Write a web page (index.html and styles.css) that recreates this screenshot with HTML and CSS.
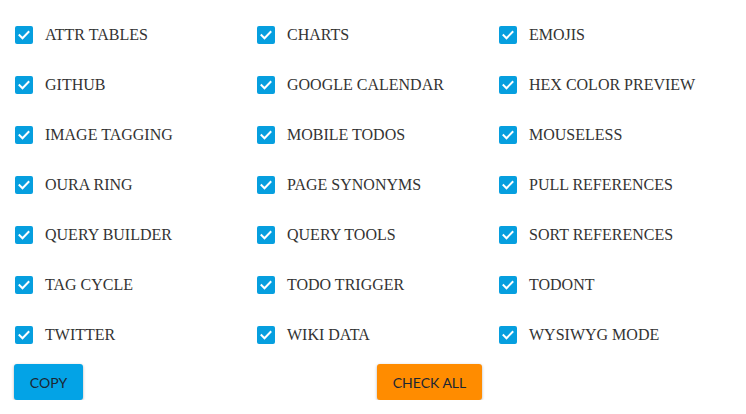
FILE: index.html
```html
<!DOCTYPE html>
<html>
<head>
<meta charset="utf-8">
<link rel="stylesheet" href="styles.css">
</head>
<body>
<div class="grid">
  <label class="item"><span class="box"><svg viewBox="0 0 18 18"><path d="M4.5 9.2l3 3 6-6.2"/></svg></span><span class="lbl">ATTR TABLES</span></label>
  <label class="item"><span class="box"><svg viewBox="0 0 18 18"><path d="M4.5 9.2l3 3 6-6.2"/></svg></span><span class="lbl">CHARTS</span></label>
  <label class="item"><span class="box"><svg viewBox="0 0 18 18"><path d="M4.5 9.2l3 3 6-6.2"/></svg></span><span class="lbl">EMOJIS</span></label>
  <label class="item"><span class="box"><svg viewBox="0 0 18 18"><path d="M4.5 9.2l3 3 6-6.2"/></svg></span><span class="lbl">GITHUB</span></label>
  <label class="item"><span class="box"><svg viewBox="0 0 18 18"><path d="M4.5 9.2l3 3 6-6.2"/></svg></span><span class="lbl">GOOGLE CALENDAR</span></label>
  <label class="item"><span class="box"><svg viewBox="0 0 18 18"><path d="M4.5 9.2l3 3 6-6.2"/></svg></span><span class="lbl">HEX COLOR PREVIEW</span></label>
  <label class="item"><span class="box"><svg viewBox="0 0 18 18"><path d="M4.5 9.2l3 3 6-6.2"/></svg></span><span class="lbl">IMAGE TAGGING</span></label>
  <label class="item"><span class="box"><svg viewBox="0 0 18 18"><path d="M4.5 9.2l3 3 6-6.2"/></svg></span><span class="lbl">MOBILE TODOS</span></label>
  <label class="item"><span class="box"><svg viewBox="0 0 18 18"><path d="M4.5 9.2l3 3 6-6.2"/></svg></span><span class="lbl">MOUSELESS</span></label>
  <label class="item"><span class="box"><svg viewBox="0 0 18 18"><path d="M4.5 9.2l3 3 6-6.2"/></svg></span><span class="lbl">OURA RING</span></label>
  <label class="item"><span class="box"><svg viewBox="0 0 18 18"><path d="M4.5 9.2l3 3 6-6.2"/></svg></span><span class="lbl">PAGE SYNONYMS</span></label>
  <label class="item"><span class="box"><svg viewBox="0 0 18 18"><path d="M4.5 9.2l3 3 6-6.2"/></svg></span><span class="lbl">PULL REFERENCES</span></label>
  <label class="item"><span class="box"><svg viewBox="0 0 18 18"><path d="M4.5 9.2l3 3 6-6.2"/></svg></span><span class="lbl">QUERY BUILDER</span></label>
  <label class="item"><span class="box"><svg viewBox="0 0 18 18"><path d="M4.5 9.2l3 3 6-6.2"/></svg></span><span class="lbl">QUERY TOOLS</span></label>
  <label class="item"><span class="box"><svg viewBox="0 0 18 18"><path d="M4.5 9.2l3 3 6-6.2"/></svg></span><span class="lbl">SORT REFERENCES</span></label>
  <label class="item"><span class="box"><svg viewBox="0 0 18 18"><path d="M4.5 9.2l3 3 6-6.2"/></svg></span><span class="lbl">TAG CYCLE</span></label>
  <label class="item"><span class="box"><svg viewBox="0 0 18 18"><path d="M4.5 9.2l3 3 6-6.2"/></svg></span><span class="lbl">TODO TRIGGER</span></label>
  <label class="item"><span class="box"><svg viewBox="0 0 18 18"><path d="M4.5 9.2l3 3 6-6.2"/></svg></span><span class="lbl">TODONT</span></label>
  <label class="item"><span class="box"><svg viewBox="0 0 18 18"><path d="M4.5 9.2l3 3 6-6.2"/></svg></span><span class="lbl">TWITTER</span></label>
  <label class="item"><span class="box"><svg viewBox="0 0 18 18"><path d="M4.5 9.2l3 3 6-6.2"/></svg></span><span class="lbl">WIKI DATA</span></label>
  <label class="item"><span class="box"><svg viewBox="0 0 18 18"><path d="M4.5 9.2l3 3 6-6.2"/></svg></span><span class="lbl">WYSIWYG MODE</span></label>
</div>
<div class="actions">
  <button class="btn copy">COPY</button>
  <button class="btn check">CHECK ALL</button>
</div>
</body>
</html>
```

FILE: styles.css
```css
html, body {
  margin: 0;
  padding: 0;
  background: #ffffff;
}
body {
  padding: 10px 0 0 15px;
}
.grid {
  display: grid;
  grid-template-columns: 242px 242px 242px;
  grid-auto-rows: 50px;
}
.item {
  display: flex;
  align-items: center;
  height: 50px;
}
.box {
  width: 18px;
  height: 18px;
  background: #069fdf;
  border-radius: 2px;
  display: flex;
  flex: none;
}
.box svg {
  width: 18px;
  height: 18px;
  fill: none;
  stroke: #ffffff;
  stroke-width: 2;
  stroke-linecap: square;
}
.lbl {
  margin-left: 12px;
  font-family: "Liberation Serif", "Times New Roman", serif;
  font-size: 16px;
  color: #333333;
}
.actions {
  display: flex;
  align-items: center;
  margin-top: 4px;
}
.btn {
  height: 36px;
  border: none;
  border-radius: 3px;
  font-family: Lato, "Noto Sans", sans-serif;
  font-size: 14px;
  color: #1b2633;
  padding: 0;
  white-space: nowrap;
  text-align: center;
  box-shadow: 0 1px 3px rgba(0, 0, 0, 0.3);
}
.copy {
  background: #03a3e6;
  margin-left: -1px;
  width: 69px;
}
.check {
  background: #ff8c00;
  margin-left: 294px;
  width: 105px;
}
```
